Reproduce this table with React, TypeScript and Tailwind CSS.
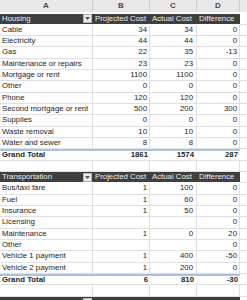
import React from "react";

type R = { label: string; b?: string; c?: string; d?: string };

const housing: R[] = [
  { label: "Cable", b: "34", c: "34", d: "0" },
  { label: "Electricity", b: "44", c: "44", d: "0" },
  { label: "Gas", b: "22", c: "35", d: "-13" },
  { label: "Maintenance or repairs", b: "23", c: "23", d: "0" },
  { label: "Mortgage or rent", b: "1100", c: "1100", d: "0" },
  { label: "Other", b: "0", c: "0", d: "0" },
  { label: "Phone", b: "120", c: "120", d: "0" },
  { label: "Second mortgage or rent", b: "500", c: "200", d: "300" },
  { label: "Supplies", b: "0", c: "0", d: "0" },
  { label: "Waste removal", b: "10", c: "10", d: "0" },
  { label: "Water and sewer", b: "8", c: "8", d: "0" },
];

const transport: R[] = [
  { label: "Bus/taxi fare", b: "1", c: "100", d: "0" },
  { label: "Fuel", b: "1", c: "60", d: "0" },
  { label: "Insurance", b: "1", c: "50", d: "0" },
  { label: "Licensing", d: "0" },
  { label: "Maintenance", b: "1", c: "0", d: "20" },
  { label: "Other", d: "0" },
  { label: "Vehicle 1 payment", b: "1", c: "400", d: "-50" },
  { label: "Vehicle 2 payment", b: "1", c: "200", d: "0" },
];

const grid = "grid shrink-0 grid-cols-[93px_57px_47px_43px_1fr] h-[11.33px] leading-[10.33px]";
const cell = "border-r border-b border-[#e0e0e0] whitespace-nowrap overflow-hidden";

function DataRow({ r }: { r: R }) {
  return (
    <div className={grid}>
      <div className={`${cell} pl-[2px]`}>{r.label}</div>
      <div className={`${cell} text-right pr-[2px]`}>{r.b ?? ""}</div>
      <div className={`${cell} text-right pr-[3px]`}>{r.c ?? ""}</div>
      <div className={`${cell} text-right pr-[2px]`}>{r.d ?? ""}</div>
      <div className="border-b border-[#e0e0e0]" />
    </div>
  );
}

function TotalRow({ b, c, d }: { b: string; c: string; d: string }) {
  const t = "border-t-2 border-t-[#a3c5e3] border-b border-b-[#e0e0e0] leading-[8.33px] font-bold whitespace-nowrap";
  return (
    <div className={grid}>
      <div className={`${t} pl-[2px]`}>Grand Total</div>
      <div className={`${t} text-right pr-[2px]`}>{b}</div>
      <div className={`${t} text-right pr-[3px]`}>{c}</div>
      <div className={`${t} text-right pr-[2px]`}>{d}</div>
      <div className="border-b border-[#e0e0e0]" />
    </div>
  );
}

function BlankRow() {
  return (
    <div className={grid}>
      <div className={cell} />
      <div className={cell} />
      <div className={cell} />
      <div className={cell} />
      <div className="border-b border-[#e0e0e0]" />
    </div>
  );
}

function FilterButton() {
  return (
    <span className="mr-[1px] w-[9px] h-[9px] shrink-0 bg-[#e9e9e9] border border-[#b5b5b5] flex items-center justify-center">
      <svg width="5" height="3" viewBox="0 0 5 3">
        <path d="M0 0 L5 0 L2.5 3 Z" fill="#555" />
      </svg>
    </span>
  );
}

function HeaderRow({ title }: { title: string }) {
  const h = "bg-[#3f3f3f] text-[#ededed] whitespace-nowrap overflow-hidden border-b border-white";
  return (
    <div className={grid}>
      <div className={`${h} flex items-center justify-between pl-[2px]`}>
        <span>{title}</span>
        <FilterButton />
      </div>
      <div className={`${h} pl-[2px]`}>Projected Cost</div>
      <div className={`${h} pl-[2px]`}>Actual Cost</div>
      <div className={`${h} pl-[2px]`}>Difference</div>
      <div className="border-b border-[#e0e0e0]" />
    </div>
  );
}

export default function App() {
  const letters = ["A", "B", "C", "D"];
  return (
    <div
      className="w-[247px] h-[300px] overflow-hidden bg-white text-[#1e1e1e] text-[7.8px] flex flex-col"
      style={{ fontFamily: '"Liberation Sans", Arial, sans-serif' }}
    >
      <div className="grid shrink-0 grid-cols-[93px_57px_47px_43px_1fr] h-[13.5px] border-b-2 border-white bg-[#e8e8e8] leading-[11px]">
        {letters.map((l) => (
          <div
            key={l}
            className="border-r border-[#cdcdcd] flex items-center justify-center text-[8px] font-bold text-[#4a4a4a]"
          >
            {l}
          </div>
        ))}
        <div />
      </div>
      <HeaderRow title="Housing" />
      {housing.map((r) => (
        <DataRow key={r.label} r={r} />
      ))}
      <TotalRow b="1861" c="1574" d="287" />
      <BlankRow />
      <HeaderRow title="Transportation" />
      {transport.map((r) => (
        <DataRow key={r.label} r={r} />
      ))}
      <TotalRow b="6" c="810" d="-30" />
      <BlankRow />
      <div className="grid grid-cols-[93px_57px_47px_43px_1fr] flex-1 min-h-[2px]">
        <div className="bg-[#3f3f3f] flex items-start justify-end pt-[1px]">
          <FilterButton />
        </div>
        <div className="bg-[#3f3f3f]" />
        <div className="bg-[#3f3f3f]" />
        <div className="bg-[#3f3f3f]" />
        <div />
      </div>
    </div>
  );
}
